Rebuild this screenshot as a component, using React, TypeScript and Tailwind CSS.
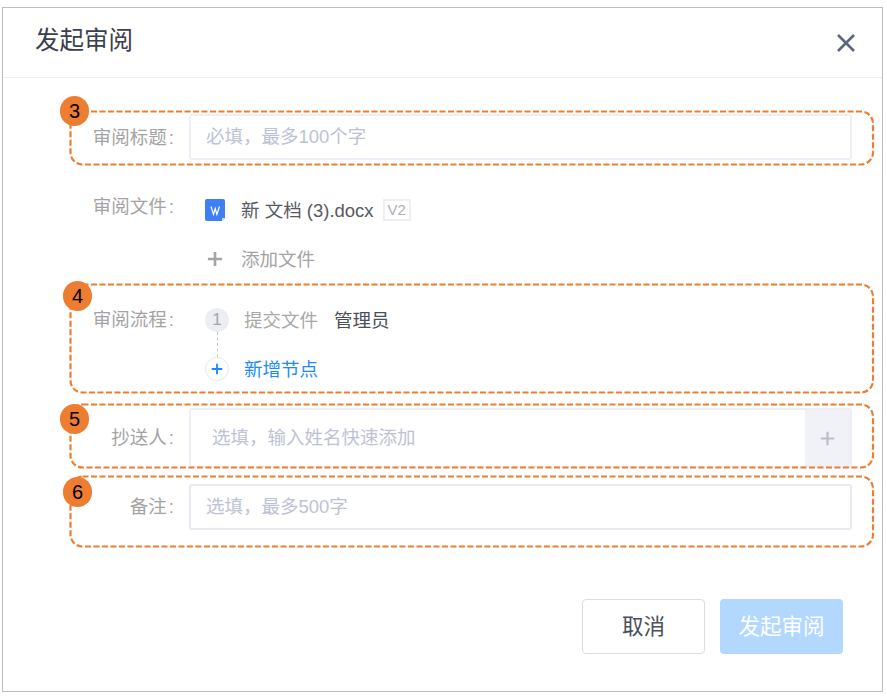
import React from 'react';

const font = 'font-["Liberation_Sans","Noto_Sans_CJK_SC",sans-serif]';

// annotation frame, drawn over the form row
const Frame = ({ num, badge, className, children }: { num: number; badge: string; className: string; children: React.ReactNode }) => (
  <div className={`relative w-[804px] ml-[67px] flex ${className}`}>
    <svg className="absolute inset-0 w-full h-full pointer-events-none z-10 overflow-visible">
      <rect
        x="0.5"
        y="0.5"
        rx="12"
        className="w-[calc(100%-1.5px)] h-[calc(100%-1px)]"
        fill="none"
        stroke="#ed7d31"
        strokeWidth="2.2"
        strokeDasharray="6 2.5"
      />
    </svg>
    <div className={`absolute z-20 w-[29px] h-[30px] rounded-full bg-[#ed7d31] text-black text-[20px] leading-[30px] text-center ${badge}`}>
      {num}
    </div>
    {children}
  </div>
);

const Label = ({ text, className = '' }: { text: string; className?: string }) => (
  <div className={`w-[104px] shrink-0 text-right text-[18.5px] leading-6 text-[#a3a3a3] whitespace-nowrap ${className}`}>
    {text}
    <span className="ml-[2px]">:</span>
  </div>
);

const inputClass =
  'w-[663px] h-[46px] ml-[15px] px-[15px] bg-white border-2 rounded-[3px] text-[18.5px] outline-none placeholder:text-[#bdc2d6]';

const Plus = ({ className, size = 18, width = 2.5 }: { className: string; size?: number; width?: number }) => (
  <svg width={size} height={size} viewBox="0 0 18 18" className={className}>
    <path d="M9 1v16M1 9h16" stroke="currentColor" strokeWidth={width} fill="none" />
  </svg>
);

const App = () => {
  return (
    <div className={`w-[887px] h-[697px] bg-white pt-[7px] pl-[2px] ${font}`}>
      <div className="w-[881px] h-[685px] border border-[#bdbdbd] flex flex-col">
        <div className="h-[70px] shrink-0 border-b border-[#eeeeee] flex items-center justify-between pl-[32px] pr-[26px]">
          <h2 className="text-[24.5px] leading-8 -mt-[3px] font-normal text-[#3a404c]">发起审阅</h2>
          <svg width="20" height="20" viewBox="0 0 20 20" className="text-[#5d667f]">
            <path d="M2 2l16 16M18 2L2 18" stroke="currentColor" strokeWidth="2.6" fill="none" />
          </svg>
        </div>

        <div className="pt-[33px] flex flex-col">
          <Frame num={3} badge="-left-[10px] -top-[15px]" className="h-[54px] pt-[3px] items-start">
            <Label text="审阅标题" className="mt-[12px]" />
            <input className={`${inputClass} border-[#eeeff4]`} placeholder="必填，最多100个字" />
          </Frame>

          <div className="h-[119px] ml-[67px] flex items-start">
            <Label text="审阅文件" className="mt-[30px]" />
            <div className="ml-[31px] pt-[34px] flex flex-col">
              <div className="flex items-center h-[22px]">
                <svg width="20" height="22" viewBox="0 0 20 22">
                  <path d="M2 0h16a2 2 0 0 1 2 2v17l-3 3H2a2 2 0 0 1-2-2V2a2 2 0 0 1 2-2z" fill="#3d7ff5" />
                  <path d="M17 22v-3h3z" fill="#cfe0fd" />
                  <path d="M6 7.5l2.5 8 1.7-6 1.7 6 2.6-8" stroke="#fff" strokeWidth="1.2" fill="none" />
                </svg>
                <span className="ml-[16px] text-[18.5px] leading-6 pt-[1px] text-[#555a63] whitespace-pre">新 文档 (3).docx</span>
                <span className="ml-[9px] w-[28px] h-[22px] border-2 border-[#eeeff3] text-[15px] leading-[18px] text-center text-[#adb0b8]">V2</span>
              </div>
              <div className="flex items-center mt-[26px] h-[24px] text-[#a3a3a3]">
                <Plus className="ml-[2px] text-[#a5a5a5]" size={16} width={3} />
                <span className="ml-[18px] text-[18.5px] leading-6 pt-[1px]">添加文件</span>
              </div>
            </div>
          </div>

          <Frame num={4} badge="-left-[7px] -top-[3px]" className="h-[109px] items-start">
            <Label text="审阅流程" className="mt-[24px]" />
            <div className="ml-[31px] pt-[24px] flex flex-col">
              <div className="flex items-center h-[24px]">
                <span className="w-[24px] h-[24px] rounded-full bg-[#eceef3] text-[#a3a6ad] text-[17px] leading-6 text-center">1</span>
                <span className="ml-[15px] text-[18.5px] leading-6 pt-[1px] text-[#a8a8a8]">提交文件</span>
                <span className="ml-[16px] text-[18.5px] leading-6 pt-[1px] text-[#4a4f58]">管理员</span>
              </div>
              <div className="ml-[12px] w-0 h-[25px] border-l border-dashed border-[#c8c8c8]" />
              <div className="flex items-center h-[24px]">
                <span className="w-[24px] h-[24px] rounded-full border border-[#e4e7f2] flex items-center justify-center">
                  <Plus className="text-[#1a8cff]" size={12} width={2.8} />
                </span>
                <span className="ml-[15px] text-[18.5px] leading-6 pt-[1px] text-[#1a8cff]">新增节点</span>
              </div>
            </div>
          </Frame>

          <Frame num={5} badge="-left-[10px] top-0" className="h-[64px] mt-[11px] pt-[4px] items-start">
            <Label text="抄送人" className="mt-[18px]" />
            <div className="relative w-[663px] h-[60px] ml-[15px] border-2 border-[#eeeff4] rounded-[3px] flex items-center">
              <input className="flex-1 min-w-0 pl-[21px] text-[18.5px] outline-none placeholder:text-[#bdc2d6]" placeholder="选填，输入姓名快速添加" />
              <div className="w-[45px] h-full bg-[#f1f2f8] flex items-center justify-center">
                <Plus className="text-[#b9bdcd]" size={15} width={2.6} />
              </div>
            </div>
          </Frame>

          <Frame num={6} badge="-left-[7px] top-[1px]" className="h-[71px] mt-[8px] pt-[8px] items-start">
            <Label text="备注" className="mt-[11px]" />
            <input className={`${inputClass} border-[#e9ebf2]`} placeholder="选填，最多500字" />
          </Frame>

          <div className="mt-[52px] pr-[39px] flex justify-end gap-[15px]">
            <button className="w-[123px] h-[55px] rounded-[4px] border border-[#dddddd] bg-white text-[21.5px] pt-[2px] text-[#4a4f58]">取消</button>
            <button className="w-[123px] h-[55px] rounded-[4px] bg-[#b3d8ff] text-[21.5px] pt-[2px] text-white">发起审阅</button>
          </div>
        </div>
      </div>
    </div>
  );
};

export default App;
